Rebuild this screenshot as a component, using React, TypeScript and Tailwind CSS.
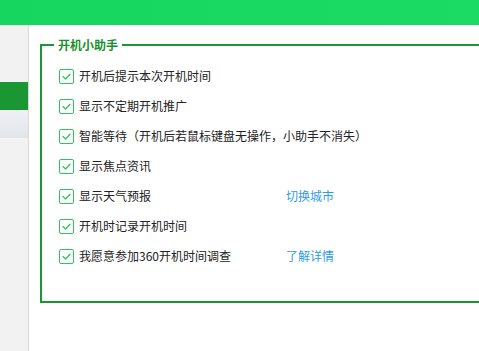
import React from 'react';

interface OptionRow {
  label: string;
  link?: string;
}

const options: OptionRow[] = [
  { label: '开机后提示本次开机时间' },
  { label: '显示不定期开机推广' },
  { label: '智能等待（开机后若鼠标键盘无操作，小助手不消失）' },
  { label: '显示焦点资讯' },
  { label: '显示天气预报', link: '切换城市' },
  { label: '开机时记录开机时间' },
  { label: '我愿意参加360开机时间调查', link: '了解详情' },
];

const CheckBox: React.FC = () => (
  <span className="flex h-[15px] w-[15px] shrink-0 items-center justify-center rounded-[2px] border border-[#2dc45c] bg-white">
    <svg width="11" height="11" viewBox="0 0 11 11" fill="none">
      <path d="M2 5.6 L4.6 8 L9 3.2" stroke="#2dc45c" strokeWidth="1.3" strokeLinecap="round" strokeLinejoin="round" />
    </svg>
  </span>
);

const App: React.FC = () => {
  return (
    <div
      className="flex h-[351px] w-full flex-col overflow-hidden bg-white text-[#222]"
      style={{ fontFamily: '"Microsoft YaHei", "Noto Sans CJK SC", "Noto Sans", sans-serif' }}
    >
      {/* Top bar */}
      <div className="h-[25px] shrink-0 bg-gradient-to-r from-[#17d65f] to-[#1bdb64]" />

      <div className="flex flex-1">
        {/* Left nav strip */}
        <div className="flex w-[29px] shrink-0 flex-col border-r border-[#d9d9d9] bg-[#f2f2f2]">
          <div className="h-[57px]" />
          <div className="h-[28px] bg-[#1a9633]" />
          <div className="h-[28px] bg-gradient-to-b from-[#eff1f4] to-[#e2e5ea]" />
        </div>

        {/* Content */}
        <div className="flex-1 pl-[11px] pt-[19px]">
          <div className="relative w-[600px] border-2 border-[#1a9633] pb-[30px] pl-[17px] pt-[15px]">
            {/* group title sits over the top border */}
            <span className="absolute -top-[10px] left-[12px] bg-white px-[4px] text-[12px] font-bold leading-[18px] text-[#1a8f2c]">
              开机小助手
            </span>
            {options.map((opt, i) => (
              <div key={i} className="flex h-[30px] items-center text-[12px] leading-[18px]">
                <CheckBox />
                <span className={opt.link ? 'ml-[5px] w-[207px]' : 'ml-[5px] whitespace-nowrap'}>
                  {opt.label}
                </span>
                {opt.link && (
                  <span className="text-[12px] text-[#2f9be6]">{opt.link}</span>
                )}
              </div>
            ))}
          </div>
        </div>
      </div>
    </div>
  );
};

export default App;
